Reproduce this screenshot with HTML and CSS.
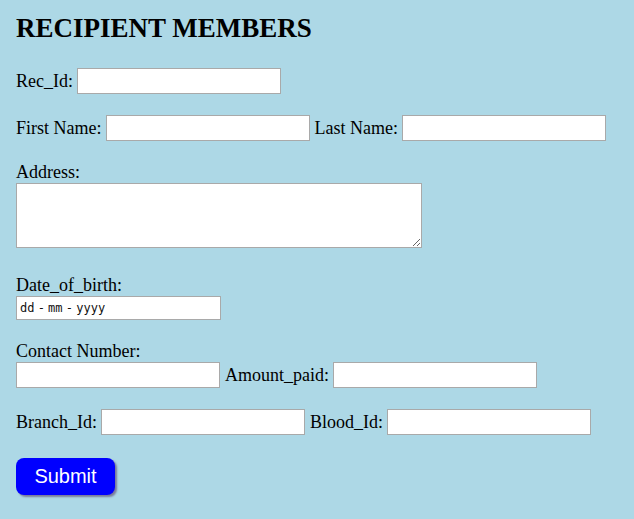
FILE: index.html
```html
<!DOCTYPE html>
<html>
<head>
<meta charset="utf-8">
<title>Recipient Members</title>
<link rel="stylesheet" href="styles.css">
</head>
<body>
<form class="form">
  <h2 class="title">RECIPIENT MEMBERS</h2>
  <div class="row row-first">
    <label class="lbl" for="rec">Rec_Id:</label>
    <input class="field" id="rec" type="text">
  </div>
  <div class="row">
    <label class="lbl" for="fn">First Name:</label>
    <input class="field" id="fn" type="text">
    <label class="lbl" for="ln">Last Name:</label>
    <input class="field" id="ln" type="text">
  </div>
  <div class="stack">
    <label class="lbl" for="addr">Address:</label>
    <textarea class="area" id="addr"></textarea>
  </div>
  <div class="stack stack-date">
    <label class="lbl" for="dob">Date_of_birth:</label>
    <input class="field date" id="dob" type="text" placeholder="dd - mm - yyyy">
  </div>
  <div class="stack">
    <label class="lbl" for="cn">Contact Number:</label>
    <div class="row">
      <input class="field" id="cn" type="text">
      <label class="lbl" for="amt">Amount_paid:</label>
      <input class="field" id="amt" type="text">
    </div>
  </div>
  <div class="row">
    <label class="lbl" for="br">Branch_Id:</label>
    <input class="field" id="br" type="text">
    <label class="lbl" for="bl">Blood_Id:</label>
    <input class="field" id="bl" type="text">
  </div>
  <div class="actions">
    <button class="submit" type="submit">Submit</button>
  </div>
</form>
</body>
</html>
```

FILE: styles.css
```css
html, body {
  margin: 0;
  padding: 0;
  background: #add8e6;
}

body {
  font-family: "Liberation Serif", "Times New Roman", serif;
  font-size: 18px;
  color: #000;
}

.form {
  padding: 13px 16px;
  display: flex;
  flex-direction: column;
  gap: 21px;
}

.title {
  margin: 0;
  font-size: 27px;
  font-weight: bold;
  line-height: 30px;
}

.row {
  display: flex;
  align-items: center;
  gap: 4px;
  height: 26px;
}

.row-first {
  margin-top: 4px;
}

.stack {
  display: flex;
  flex-direction: column;
  align-items: flex-start;
}

.stack-date {
  margin-top: 6px;
}

.lbl {
  line-height: 21px;
}

.field {
  box-sizing: border-box;
  width: 204px;
  height: 26px;
  margin: 0;
  padding: 1px 3px;
  border: 1px solid #a9a9a9;
  background: #fff;
  font-family: "Liberation Sans", Arial, sans-serif;
  font-size: 13px;
}

.field + .lbl {
  margin-left: 1px;
}

.date {
  width: 205px;
  height: 24px;
  font-family: "DejaVu Sans Mono", monospace;
  font-size: 12px;
  word-spacing: -4px;
}

.date::placeholder {
  color: #111;
  opacity: 1;
}

.area {
  box-sizing: border-box;
  width: 406px;
  height: 65px;
  margin: 0;
  border: 1px solid #a9a9a9;
  background: #fff;
}

.actions {
  margin-top: 2px;
}

.submit {
  box-sizing: border-box;
  width: 99px;
  height: 37px;
  border: none;
  border-radius: 8px;
  background: #0000ff;
  color: #fff;
  font-family: "Liberation Sans", Arial, sans-serif;
  font-size: 20px;
  box-shadow: 2px 2px 2px #7a7a9a;
  padding: 0;
}
```
